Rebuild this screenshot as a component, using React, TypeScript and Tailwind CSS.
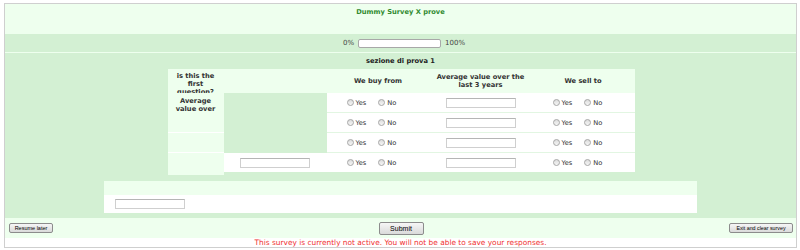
import React from "react";

const PALE = "bg-[#eeffee]";

function Radio({ label }: { label: string }) {
  return (
    <span className="flex items-center gap-[2px]">
      <span className="inline-block w-[7px] h-[7px] rounded-full border border-[#a6a6a6] bg-gradient-to-b from-[#dcdcdc] to-[#f6f6f6]" />
      <span>{label}</span>
    </span>
  );
}

function YesNo() {
  return (
    <div className="flex items-center gap-[12px] pl-[20px] h-full">
      <Radio label="Yes" />
      <Radio label="No" />
    </div>
  );
}

function TextInput({ w = 70 }: { w?: number }) {
  return (
    <span
      className="inline-block h-[10px] bg-white border border-[#cfcfcf] border-t-[#b5b5b5]"
      style={{ width: w }}
    />
  );
}

function Row({ first, last }: { first?: boolean; last?: boolean }) {
  const b = first ? "" : "border-t border-[#e2f6e2]";
  return (
    <div className={`grid grid-cols-[103px_103px_102px_103px] ${first ? "h-[19px]" : "h-[20px]"}`}>
      <div className={`${last ? "bg-white border-t border-[#d3f0d3]" : ""} flex items-center justify-center`}>
        {last && <TextInput />}
      </div>
      <div className={`bg-white ${b}`}>
        <YesNo />
      </div>
      <div className={`bg-white ${b} flex items-center justify-center`}>
        <TextInput />
      </div>
      <div className={`bg-white ${b}`}>
        <div className="pl-[1px] h-full">
          <YesNo />
        </div>
      </div>
    </div>
  );
}

export default function App() {
  return (
    <div
      className="w-[800px] h-[250px] bg-white pt-[3px] pl-[4px] pr-[3px] text-[#333]"
      style={{ fontFamily: '"DejaVu Sans", Verdana, sans-serif' }}
    >
      <div className="h-[245px] border border-[#cfcfcf] flex flex-col">
        {/* title */}
        <div className={`h-[30px] ${PALE} flex justify-center pt-[4px]`}>
          <span className="text-[6.7px] leading-[8px] font-bold text-[#2f8a2f]">Dummy Survey X prove</span>
        </div>
        {/* progress */}
        <div className="h-[18px] bg-[#d3f0d3] flex items-center justify-center gap-[4px] text-[7px] text-[#444] pl-[7px]">
          <span>0%</span>
          <span className="inline-block w-[83px] h-[9px] bg-white border border-[#a8a8a8] rounded-[2px]" />
          <span>100%</span>
        </div>
        <div className="h-[1px] bg-[#eeffee]" />
        {/* main */}
        <div className="h-[165px] bg-[#d3f0d3] flex flex-col items-center text-[6.7px] leading-[8px]">
          <div className="h-[16px] flex items-center font-bold text-[#222]">sezione di prova 1</div>
          <div className="flex w-[467px] ml-[1px]">
            <div className="w-[56px] flex flex-col text-center font-bold">
              <div className={`h-[24px] ${PALE} overflow-hidden pt-[3px] px-[4px]`}>is this the first question?</div>
              <div className={`h-[39px] ${PALE} pt-[4px]`}>
                <div className="h-[16px] overflow-hidden px-[6px]">Average value over</div>
              </div>
              <div className="h-[1px] bg-white" />
              <div className={`h-[19px] ${PALE}`} />
              <div className="h-[1px] bg-white" />
              <div className={`h-[22px] ${PALE}`} />
            </div>
            <div className="w-[411px] flex flex-col">
              <div className={`h-[24px] ${PALE} grid grid-cols-[103px_103px_102px_103px] items-center text-center font-bold`}>
                <div />
                <div>We buy from</div>
                <div className="px-[4px]">Average value over the last 3 years</div>
                <div>We sell to</div>
              </div>
              <Row first />
              <Row />
              <Row />
              <Row last />
            </div>
          </div>
          <div className="mt-[6px] w-[593px] flex flex-col">
            <div className={`h-[14px] ${PALE}`} />
            <div className="h-[18px] bg-white pl-[11px] pt-[4px] flex items-start">
              <TextInput />
            </div>
          </div>
        </div>
        {/* footer */}
        <div
          className={`h-[20px] ${PALE} grid grid-cols-[1fr_auto_1fr] items-center pl-[4px] pr-[3px] text-black`}
          style={{ fontFamily: '"Liberation Sans", Arial, sans-serif' }}
        >
          <div className="flex">
            <button className="w-[44px] h-[10px] border border-[#8c8c8c] rounded-[2px] bg-gradient-to-b from-[#f6f6f6] to-[#dadada] text-[5.5px] leading-[8px] flex items-center justify-center">
              Resume later
            </button>
          </div>
          <button className="w-[45px] h-[13px] border border-[#8c8c8c] rounded-[2px] bg-gradient-to-b from-[#f6f6f6] to-[#dadada] text-[7px] leading-[11px] flex items-center justify-center">
            Submit
          </button>
          <div className="flex justify-end">
            <button className="w-[64px] h-[10px] border border-[#8c8c8c] rounded-[2px] bg-gradient-to-b from-[#f6f6f6] to-[#dadada] text-[5.3px] leading-[8px] flex items-center justify-center">
              Exit and clear survey
            </button>
          </div>
        </div>
        <div className="h-[9px] bg-white flex items-center justify-center text-[7.4px] leading-[8px] text-[#f03030]">
          This survey is currently not active. You will not be able to save your responses.
        </div>
      </div>
    </div>
  );
}
